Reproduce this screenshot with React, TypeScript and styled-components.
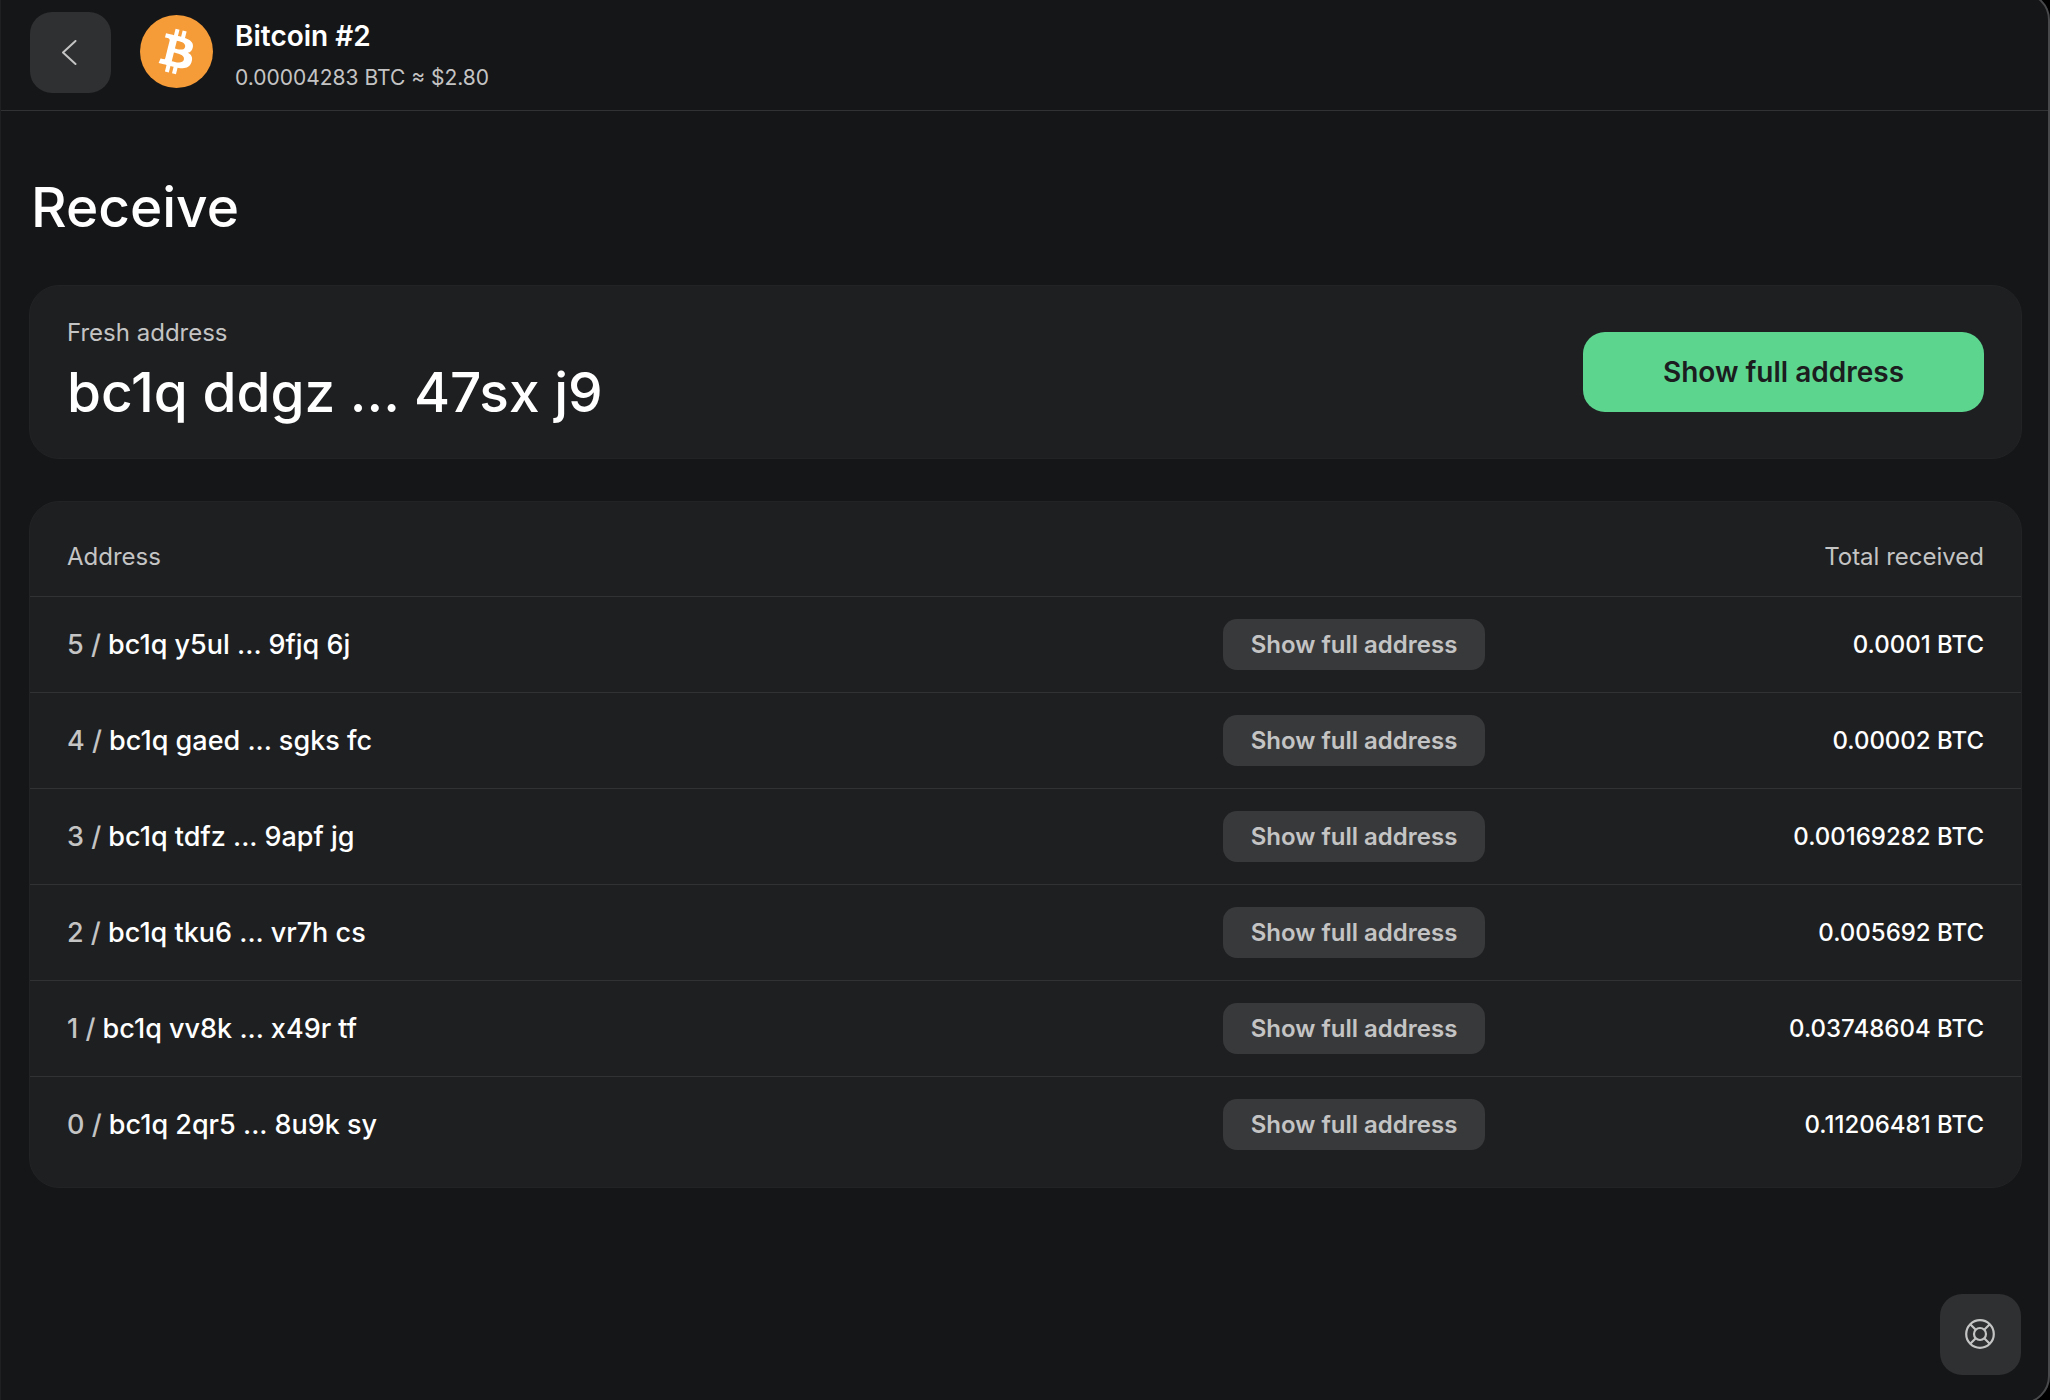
import React from "react";
import styled, { createGlobalStyle } from "styled-components";

const GlobalStyle = createGlobalStyle`
  *, *::before, *::after { box-sizing: border-box; }
  html, body { margin: 0; background: #000; }
  body { font-family: Inter, "Liberation Sans", sans-serif; color: #fff; }
  h1, h2, p { margin: 0; }
  button { font: inherit; border: 0; padding: 0; cursor: pointer; }
`;

const Frame = styled.div`
  position: relative;
  display: flex;
  flex-direction: column;
  min-height: 100vh;
  background: #151618;
  border-left: 1px solid #1f2022;
  overflow: hidden;

  &::after {
    content: "";
    position: absolute;
    inset: -8px 0 -4px -40px;
    border: 2px solid #48494b;
    border-radius: 28px;
    box-shadow: 0 0 0 40px #000;
    clip-path: inset(8px 0 4px 40px);
    pointer-events: none;
  }
`;

const Header = styled.header`
  display: flex;
  align-items: flex-start;
  height: 111px;
  padding: 12px 29px 0;
  border-bottom: 1px solid #303234;
`;

const SquareButton = styled.button`
  display: grid;
  place-items: center;
  width: 81px;
  height: 81px;
  border-radius: 22px;
  background: #2e3031;
  color: #c4c4c4;
`;

const Coin = styled.svg`
  width: 73px;
  height: 73px;
  margin: 3px 22px 0 29px;
`;

const AccountName = styled.h2`
  font-size: 28px;
  line-height: 40px;
  font-weight: 600;
  margin-top: 4px;
`;

const AccountBalance = styled.p`
  font-size: 21px;
  line-height: 44px;
  color: #c4c4c4;
`;

const Main = styled.main`
  flex: 1;
  padding: 60px 28px 0;
`;

const PageTitle = styled.h1`
  padding-left: 2px;
  margin-bottom: 42px;
  font-size: 55px;
  line-height: 72px;
  font-weight: 500;
`;

const Card = styled.section`
  border-radius: 30px;
  background: #1e1f21;
  border: 1px solid #222325;
`;

const FreshCard = styled(Card)`
  display: flex;
  align-items: center;
  justify-content: space-between;
  min-height: 174px;
  padding: 0 37px;
  margin-bottom: 42px;
`;

const Caption = styled.p`
  padding-top: 2px;
  font-size: 24px;
  line-height: 38px;
  color: #c4c4c4;
`;

const FreshAddress = styled.p`
  font-size: 55px;
  line-height: 80px;
  font-weight: 500;
`;

const PrimaryButton = styled.button`
  width: 401px;
  height: 80px;
  border-radius: 22px;
  background: #5cd68f;
  color: #1b1d1e;
  font-size: 28px;
  font-weight: 600;
`;

const TableCard = styled(Card)`
  padding-bottom: 15px;
`;

const Table = styled.table`
  width: 100%;
  border-collapse: collapse;
  table-layout: fixed;
`;

const SideColumn = styled.col`
  width: 399px;
`;

const HeadCell = styled.th<{ $align?: "right" }>`
  height: 94px;
  padding: 15px 37px 0;
  font-size: 24px;
  font-weight: 400;
  color: #c4c4c4;
  text-align: ${(p) => p.$align ?? "left"};
`;

const Row = styled.tr`
  height: 96px;
  border-top: 1px solid #303234;
`;

const AddressCell = styled.td`
  padding: 0 37px;
  font-size: 27px;
  font-weight: 500;
`;

const Index = styled.span`
  color: #c4c4c4;
`;

const ActionCell = styled.td`
  padding: 0;
`;

const RowButton = styled.button`
  display: block;
  width: 262px;
  height: 51px;
  border-radius: 14px;
  background: #38393b;
  color: #c4c4c4;
  font-size: 24px;
  font-weight: 600;
`;

const AmountCell = styled.td`
  padding: 0 37px;
  font-size: 24px;
  font-weight: 500;
  text-align: right;
`;

const Footer = styled.footer`
  display: flex;
  justify-content: flex-end;
  padding: 0 29px 25px;
`;

const addresses = [
  { index: 5, address: "bc1q y5ul ... 9fjq 6j", total: "0.0001 BTC" },
  { index: 4, address: "bc1q gaed ... sgks fc", total: "0.00002 BTC" },
  { index: 3, address: "bc1q tdfz ... 9apf jg", total: "0.00169282 BTC" },
  { index: 2, address: "bc1q tku6 ... vr7h cs", total: "0.005692 BTC" },
  { index: 1, address: "bc1q vv8k ... x49r tf", total: "0.03748604 BTC" },
  { index: 0, address: "bc1q 2qr5 ... 8u9k sy", total: "0.11206481 BTC" },
];

const BackIcon = () => (
  <svg width="20" height="26" viewBox="0 0 20 26" fill="none" stroke="currentColor" strokeWidth="2" strokeLinecap="round" strokeLinejoin="round" aria-hidden="true">
    <path d="M14.5 1 2 12.5 14.5 24" />
  </svg>
);

const BitcoinIcon = () => (
  <Coin viewBox="0 0 32 32" aria-hidden="true">
    <circle cx="16" cy="16" r="16" fill="#f59b38" />
    <path
      fill="#fff"
      d="M23.189 14.02c.314-2.096-1.283-3.223-3.465-3.975l.708-2.84-1.728-.43-.69 2.765c-.454-.114-.92-.22-1.385-.326l.695-2.783L15.596 6l-.708 2.839c-.376-.086-.746-.17-1.104-.26l.002-.009-2.384-.595-.46 1.846s1.283.294 1.256.312c.7.175.826.638.805 1.006l-.806 3.235c.048.012.11.03.18.057l-.183-.045-1.13 4.532c-.086.212-.303.531-.793.41.018.025-1.256-.313-1.256-.313l-.858 1.978 2.25.561c.418.105.828.215 1.231.318l-.715 2.872 1.727.43.708-2.84c.472.127.93.245 1.378.357l-.706 2.828 1.728.43.715-2.866c2.948.558 5.164.333 6.097-2.333.752-2.146-.037-3.385-1.588-4.192 1.13-.26 1.98-1.003 2.207-2.538zm-3.95 5.538c-.533 2.147-4.148.986-5.32.695l.95-3.805c1.172.293 4.929.872 4.37 3.11zm.535-5.569c-.487 1.953-3.495.96-4.47.717l.86-3.45c.975.243 4.118.696 3.61 2.733z"
    />
  </Coin>
);

const HelpIcon = () => (
  <svg width="31" height="31" viewBox="0 0 31 31" fill="none" stroke="currentColor" strokeWidth="2.2" aria-hidden="true">
    <circle cx="15" cy="15" r="13.8" />
    <circle cx="15" cy="15" r="6" />
    <path d="M5 5l6 6M19 19l6 6M25 5l-6 6M11 19l-6 6" />
  </svg>
);

export default function App() {
  return (
    <Frame>
      <GlobalStyle />
      <Header>
        <SquareButton type="button" aria-label="Back">
          <BackIcon />
        </SquareButton>
        <BitcoinIcon />
        <div>
          <AccountName>Bitcoin #2</AccountName>
          <AccountBalance>0.00004283 BTC ≈ $2.80</AccountBalance>
        </div>
      </Header>
      <Main>
        <PageTitle>Receive</PageTitle>
        <FreshCard>
          <div>
            <Caption>Fresh address</Caption>
            <FreshAddress>bc1q ddgz ... 47sx j9</FreshAddress>
          </div>
          <PrimaryButton type="button">Show full address</PrimaryButton>
        </FreshCard>
        <TableCard>
          <Table>
            <colgroup>
              <col />
              <SideColumn />
              <SideColumn />
            </colgroup>
            <thead>
              <tr>
                <HeadCell scope="col">Address</HeadCell>
                <HeadCell as="td" />
                <HeadCell scope="col" $align="right">Total received</HeadCell>
              </tr>
            </thead>
            <tbody>
              {addresses.map((row) => (
                <Row key={row.index}>
                  <AddressCell>
                    <Index>{row.index} / </Index>
                    {row.address}
                  </AddressCell>
                  <ActionCell>
                    <RowButton type="button">Show full address</RowButton>
                  </ActionCell>
                  <AmountCell>{row.total}</AmountCell>
                </Row>
              ))}
            </tbody>
          </Table>
        </TableCard>
      </Main>
      <Footer>
        <SquareButton type="button" aria-label="Help">
          <HelpIcon />
        </SquareButton>
      </Footer>
    </Frame>
  );
}
